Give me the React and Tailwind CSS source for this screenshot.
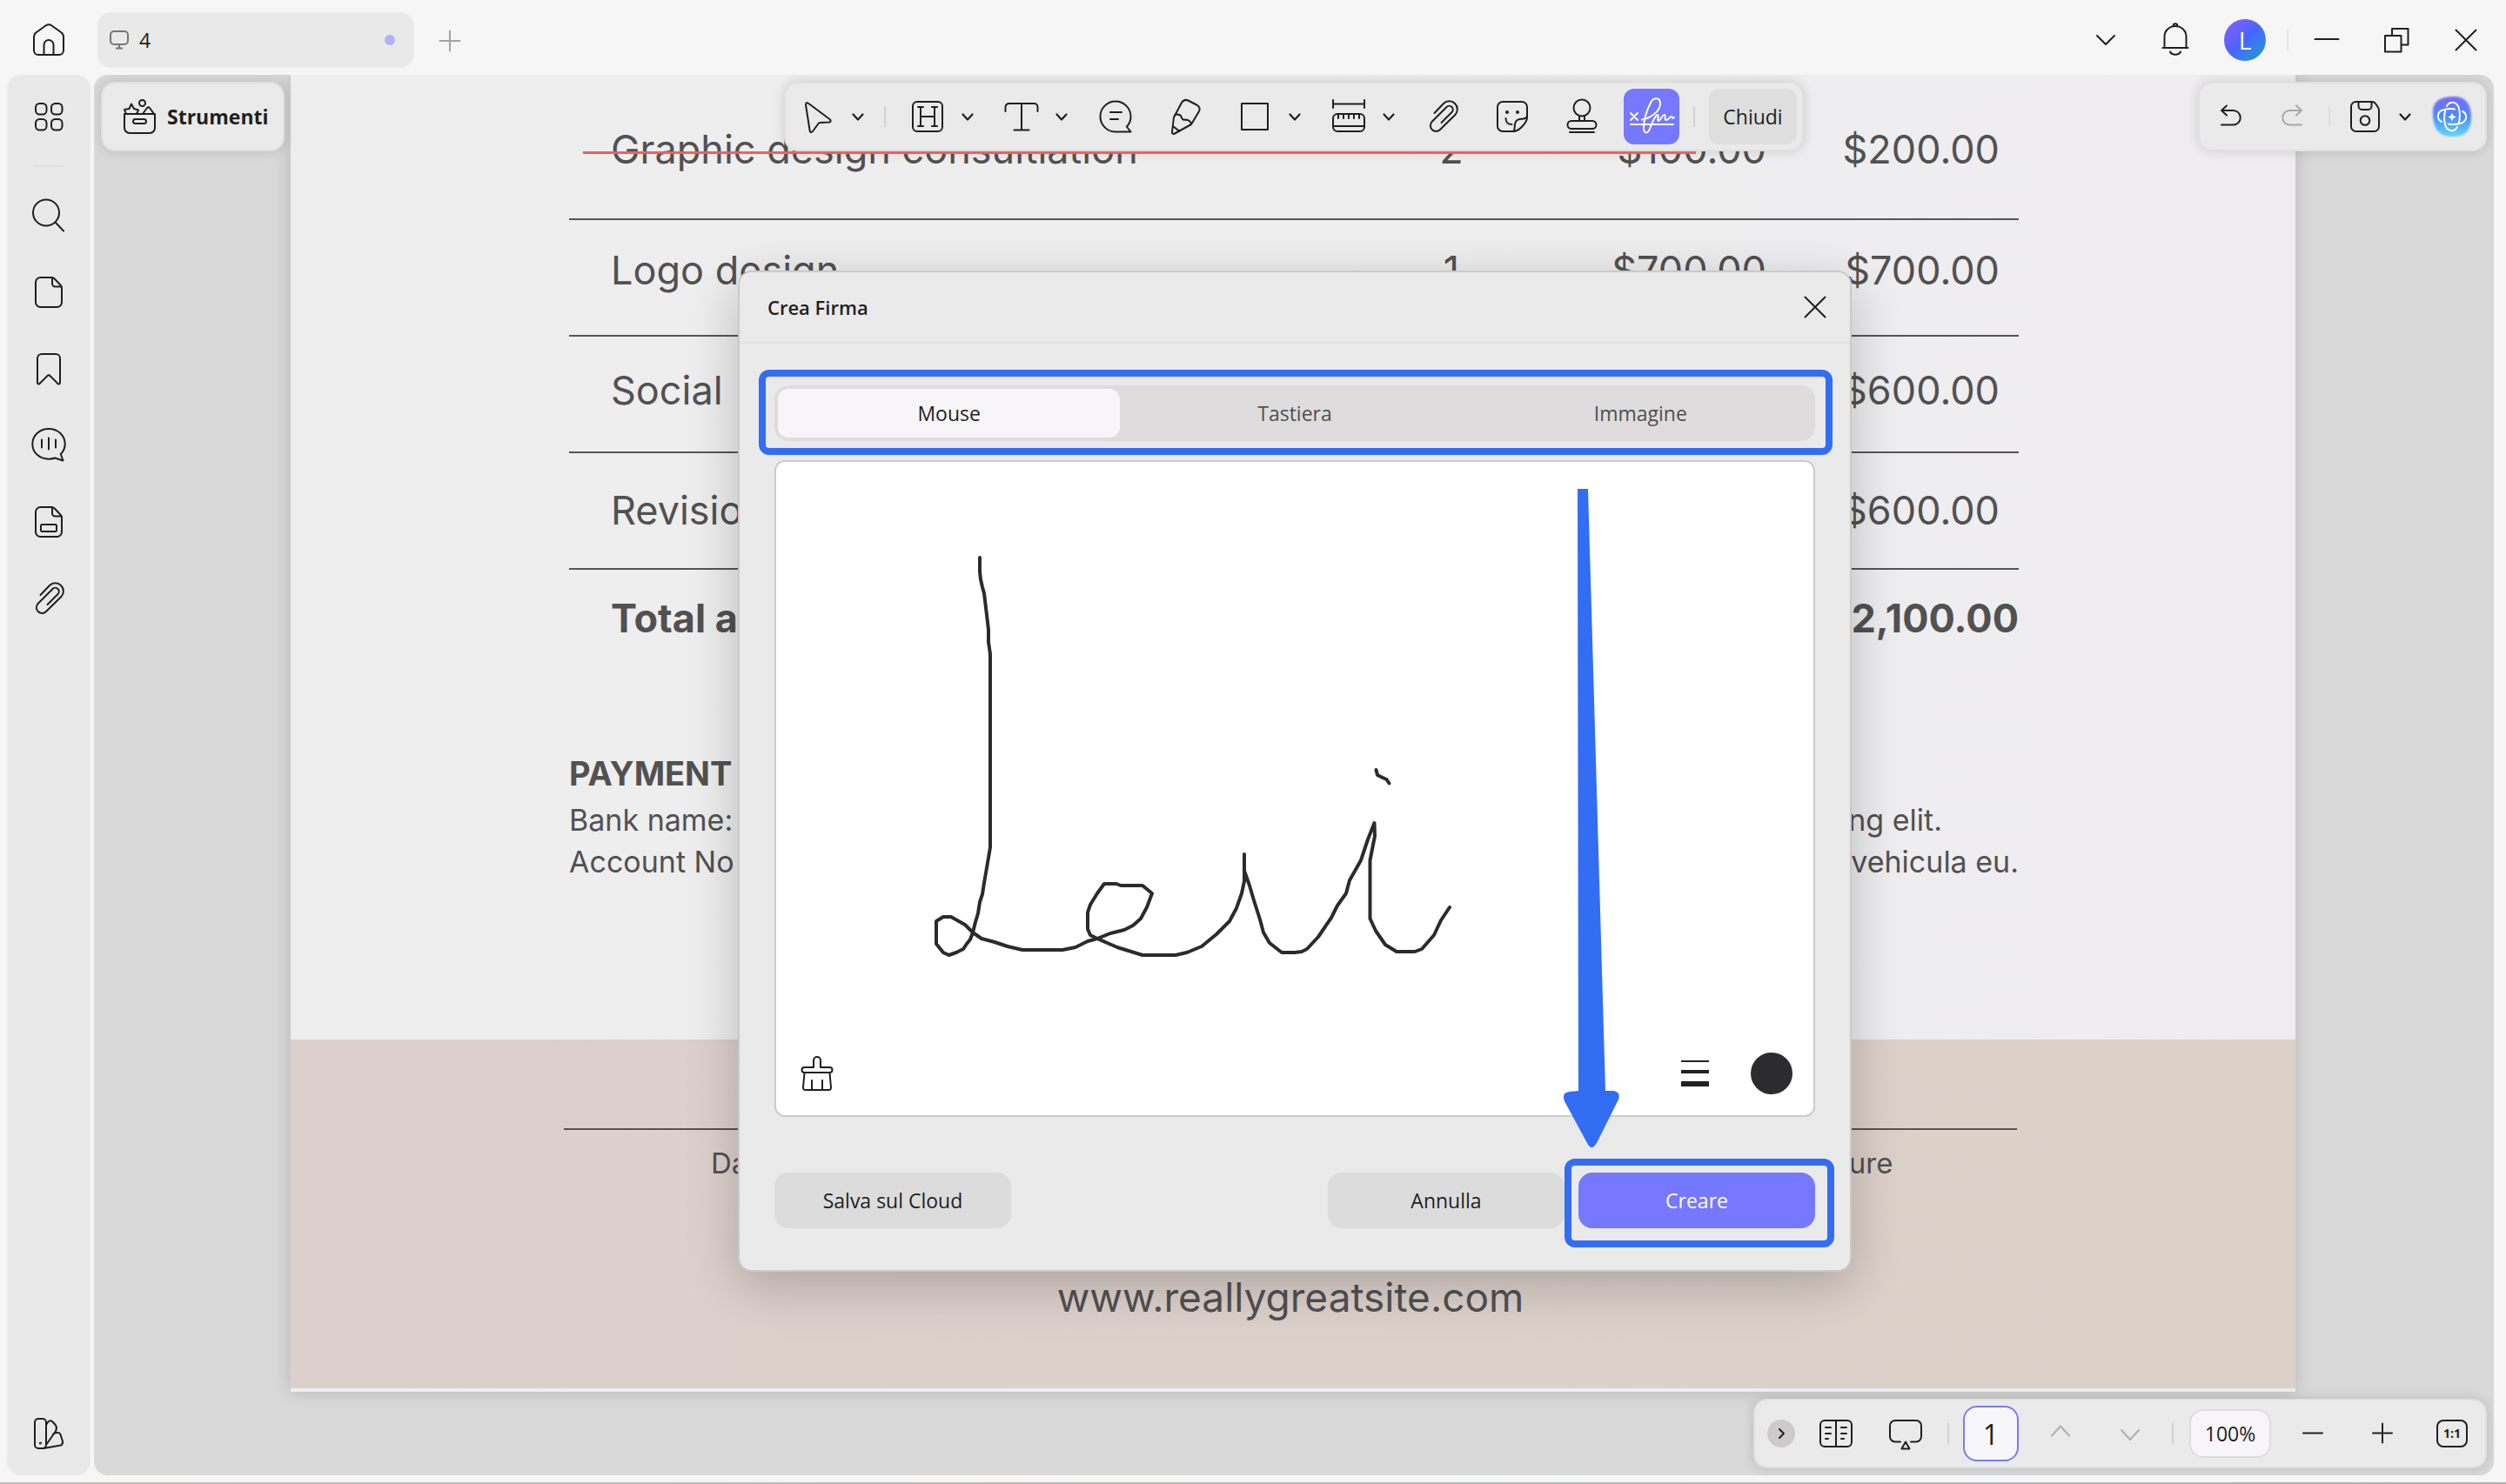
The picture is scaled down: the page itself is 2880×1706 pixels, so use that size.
import React, { useState } from 'react';

// Shared 40x40 line icon
const Icon = ({ children, className = 'size-10' }) => (
  <svg
    viewBox="0 0 40 40"
    className={`${className} shrink-0 overflow-visible`}
    fill="none"
    stroke="currentColor"
    strokeWidth="2"
    strokeLinecap="round"
    strokeLinejoin="round"
    aria-hidden="true"
  >
    {children}
  </svg>
);

const SmallChevron = () => (
  <svg viewBox="0 0 16 16" className="size-4 shrink-0" fill="none" stroke="currentColor" strokeWidth="2.2" strokeLinecap="round" strokeLinejoin="round" aria-hidden="true">
    <path d="M2.500 5.500l5.500 6 5.500-6" />
  </svg>
);

const clipPath = 'M10.5 16 21 5a9.3 9.3 0 0 1 13.3 13L17 35a6.5 6.5 0 0 1-9.2-9.2L24.5 9a4.2 4.2 0 0 1 6 6L18.5 27';
const pagePath = 'M10.5 3H23a6 6 0 0 1 4 1.8l6.5 7A5 5 0 0 1 35 15v16.5a5.5 5.5 0 0 1-5.5 5.5h-19A5.5 5.5 0 0 1 5 31.5v-23A5.5 5.5 0 0 1 10.5 3ZM24 3v7a3.5 3.5 0 0 0 3.5 3.5H35';

const icons = {
  home: <path d="M3 16.5c0-2.5 1-4 3-5.5l10.5-7.5q3.500-2.500 7 0L34 11c2 1.500 3 3 3 5.500V32a5 5 0 0 1-5 5H8a5 5 0 0 1-5-5ZM14.500 37V25.500a5.500 5.500 0 0 1 11 0V37" />,
  grid: (
    <>
      <rect x="5" y="5" width="12.500" height="12.500" rx="4.500" />
      <rect x="23" y="5" width="12.500" height="12.500" rx="4.500" />
      <rect x="5" y="23" width="12.500" height="12.500" rx="4.500" />
      <rect x="23" y="23" width="12.500" height="12.500" rx="4.500" />
    </>
  ),
  search: (
    <>
      <circle cx="17" cy="16.500" r="15" />
      <path d="M28 28l9 9.500" />
    </>
  ),
  page: <path d={pagePath} />,
  bookmark: <path d="M12 3h16a5 5 0 0 1 5 5v28c0 1.500-1.500 2-2.500 1l-9-9a2 2 0 0 0-3 0l-9 9c-1 1-2.500.5-2.500-1V8a5 5 0 0 1 5-5Z" />,
  voice: <path d="M27 34.500c-2 .8-4.500 1.200-7 1.200C9.500 35.700 1.300 28.500 1.300 18.500S9.500 1 20 1s18.700 7.300 18.700 17.500c0 4.300-1.700 8.300-4.900 11.500l2.700 7.500ZM12 13.500v9M20 11.500v13M28 13.500v9" />,
  form: (
    <>
      <path d={pagePath} />
      <rect x="11" y="23" width="18" height="8" rx="1.500" />
    </>
  ),
  clip: <path d={clipPath} />,
  swatch: (
    <>
      <rect x="4" y="3" width="13" height="34" rx="4" />
      <circle cx="10.500" cy="31" r="0.6" />
      <path d="M17 10l2-3c2-2.500 4-2 6 0l3 3.500c1.500 2 1.200 4 .2 6.500L17 33M25 20.500c3-1.500 7-2.500 8.500.5L36 29c.5 2.500 0 3.500-2 4.500L14 37" />
    </>
  ),
  toolbox: (
    <>
      <path d="M3 17h35v16a6 6 0 0 1-6 6H9a6 6 0 0 1-6-6ZM5 17l-2-5 5.500-1L11 5.500l3 5.500 5 1.500-2 4.500M24 17l5-7q1.500-1.500 3 0l5 7" />
      <rect x="13" y="23" width="15" height="5" rx="2.500" />
      <circle cx="23.500" cy="4.500" r="3.500" />
    </>
  ),
  cursor: <path d="M6 6.500c0-2.500 1.500-3 3.300-1.500L33.500 23c1.800 1.500 1.500 3.200-.7 3.500L22.500 27c-1.200 0-1.800.5-2.300 1.500L14 37c-1.200 1.600-3 1.400-3.300-.5Z" />,
  highlight: (
    <>
      <rect x="3" y="3" width="34" height="34" rx="5" />
      <path d="M12 9v22M28 9v22M12 20h16M9 9h6M25 9h6M9 31h6M25 31h6" />
    </>
  ),
  text: <path d="M1.500 14V9a4 4 0 0 1 4-4h29a4 4 0 0 1 4 4v5M20 5v30M11.500 35.500h17" />,
  comment: <path d="M37.500 37.500H20A17.500 17.500 0 1 1 37.500 20c0 4.500-1.600 8.500-4.700 11.500ZM14 15h13M14 23h9" />,
  pencil: <path d="M5 37.500 7 21l9-17q3-4.500 7.500-2.500L34 7q4 2.800 2 7L27 29 8 39.500Q5 41 5 37.500ZM8 18q6-1.500 7.500 2 1 4.500 4.500 3.500 6.500.500 7 5.500M6 31l7.500 6" />,
  square: <rect x="5" y="5" width="30" height="30" />,
  ruler: (
    <>
      <path d="M2 1v9M38 1v9M2 5.500h36M2 31h36M8 17v5M14 17v5M20 17v5M26 17v5M32 17v5" />
      <rect x="2" y="17" width="36" height="20" rx="5" />
    </>
  ),
  sticker: (
    <>
      <path d="M21.500 37H9a6 6 0 0 1-6-6V9a6 6 0 0 1 6-6h22a6 6 0 0 1 6 6v12c0 6-9.500 16-15.500 16 1.500-2 1-5 1.500-8s2-5.500 5.500-6c4-.5 7 0 8.500-3M12.500 22c0 4.500 3 7 7 7" />
      <circle cx="14" cy="15" r="1" fill="currentColor" />
      <circle cx="26" cy="15" r="1" fill="currentColor" />
    </>
  ),
  stamp: (
    <>
      <circle cx="20" cy="10" r="9.500" />
      <path d="M17 20v5M23 20v5M6 38h28" />
      <rect x="3.500" y="25" width="33" height="9" rx="4.500" />
    </>
  ),
  undo: <path d="M15 7.500 9 13l6 5.500M9 13h13.500a8 8 0 0 1 0 16.500H9" />,
  redo: <path d="M25 7.500 31 13l-6 5.500M31 13H17.500a8 8 0 0 0 0 16.500H31" />,
  save: (
    <>
      <path d="M9.500 3H28c2 0 3 .5 4 2l3 4.500c.7 1 1 2 1 3.500v18.500a5.500 5.500 0 0 1-5.500 5.500h-21A5.500 5.500 0 0 1 4 31.500v-23A5.500 5.500 0 0 1 9.500 3ZM12.500 3v5a4 4 0 0 0 4 4h7a4 4 0 0 0 4-4V3" />
      <circle cx="20" cy="24.500" r="5.300" />
    </>
  ),
  bell: <path d="M7.500 29V16a12.500 12 0 0 1 25 0v13M5.500 29h29M17.700 4v-.5a2.300 2.300 0 0 1 4.600 0V4M14 33.500a6.300 4.500 0 0 0 12 0" />,
  chevron: <path d="M10 15l10 10 10-10" />,
  minimize: <path d="M6.500 19h27" />,
  restore: <path d="M7 15h18.500v18.500H7ZM15 15V7h18.500v18.500h-8" />,
  close: <path d="M8.500 8.500l23 23M31.500 8.500l-23 23" />,
  book: (
    <>
      <rect x="2" y="5" width="36" height="30" rx="5" />
      <path d="M20 5v30M8 13h6M8 20h6M8 26h3M26 13h6M26 20h6M26 26h3" />
    </>
  ),
  screen: <path d="M14 29.500H8a6 6 0 0 1-6-6V11a6 6 0 0 1 6-6h24a6 6 0 0 1 6 6v12.500a6 6 0 0 1-6 6h-6M20 29.500l4.500 8h-9Z" />,
  up: <path d="M10 22.500l10-11 10 11" />,
  down: <path d="M10 16l10 11 10-11" />,
  minus: <path d="M9 19.500h22" />,
  plus: <path d="M9 19.500h22M20 8.500v22" />,
  brush: <path d="M16 13V5a4 4 0 0 1 8 0v8h10.500a3 3 0 0 1 0 6h-29a3 3 0 0 1 0-6ZM5.500 19.500 4 36a2.500 2.500 0 0 0 2.500 3h27a2.500 2.500 0 0 0 2.500-3l-1.500-16.500M14 28v11M26 28v11" />,
};

const IconButton = ({ name, label, className = '' }) => (
  <button type="button" aria-label={label} className={className}>
    <Icon>{icons[name]}</Icon>
  </button>
);

// Tool with a dropdown arrow beside it
const MenuTool = ({ name, label, className = 'mr-[34px]' }) => (
  <button type="button" aria-label={label} className={`flex items-center gap-[18px] ${className}`}>
    <Icon>{icons[name]}</Icon>
    <SmallChevron />
  </button>
);

const Divider = ({ className = '' }) => <div className={`h-6 w-0.5 shrink-0 bg-[#d2d2d2] ${className}`}></div>;

const panel = 'flex h-20 items-center rounded-2xl border-2 border-[#e0e0e0] bg-[#eaeaea] shadow-[0_0_14px_rgba(0,0,0,0.14)]';

const TopBar = () => (
  <header className="flex h-[86px] shrink-0 items-center pt-1.5 pr-[26px]">
    <div className="flex w-28 justify-center">
      <IconButton name="home" label="Home" />
    </div>
    <div className="flex h-16 w-[364px] items-center rounded-2xl bg-[#e9e9e9] pr-[22px] pl-3.5">
      <svg viewBox="0 0 22 22" className="size-[22px] text-[#777]" fill="none" stroke="currentColor" strokeWidth="2" aria-hidden="true">
        <rect x="1" y="1" width="20" height="15" rx="4" />
        <path d="M11 16v4M7 20.500h8" />
      </svg>
      <span className="ml-3 flex-1">4</span>
      <span className="size-3 rounded-full bg-[#b4b0f2]"></span>
    </div>
    <button type="button" aria-label="Nuova scheda" className="ml-[21px] text-[#a3a3a3]">
      <Icon>
        <path d="M8.500 21h23M20 9.500v23" />
      </Icon>
    </button>
    <div className="flex flex-1 items-center justify-end">
      <IconButton name="chevron" label="Altro" className="mr-10" />
      <IconButton name="bell" label="Notifiche" className="mr-9" />
      <button type="button" className="mr-6 size-12 rounded-full bg-linear-to-br from-[#8a5cff] via-[#4864ff] to-[#00a0c8] text-[28px] leading-none text-white">
        L
      </button>
      <div className="mr-6 h-6 w-0.5 bg-[#e6e6e8]"></div>
      <IconButton name="minimize" label="Riduci" className="mr-10" />
      <IconButton name="restore" label="Ripristina" className="mr-10" />
      <IconButton name="close" label="Chiudi finestra" />
    </div>
  </header>
);

const sideItems = [
  ['search', 'Cerca'],
  ['page', 'Pagine'],
  ['bookmark', 'Segnalibri'],
  ['voice', 'Commenti'],
  ['form', 'Campi'],
  ['clip', 'Allegati'],
];

const Sidebar = () => (
  <nav className="mr-1 ml-2 flex w-24 shrink-0 flex-col items-center rounded-2xl bg-[#e9e9e9] pt-1">
    <IconButton name="grid" label="Miniature" className="flex h-[88px] items-center" />
    <div className="my-3 h-0.5 w-9 bg-[#e0e0e0]"></div>
    {sideItems.map(([name, label]) => (
      <IconButton key={name} name={name} label={label} className="flex h-[88px] items-center" />
    ))}
    <IconButton name="swatch" label="Temi" className="mt-auto mb-7" />
  </nav>
);

const AiLogo = () => (
  <svg viewBox="0 0 48 48" className="size-12" fill="none" aria-hidden="true">
    <defs>
      <linearGradient id="ai" x1="0" y1="0" x2="0" y2="1">
        <stop offset="0" stopColor="#7a68fb" />
        <stop offset="0.5" stopColor="#4a8cff" />
        <stop offset="1" stopColor="#5fd8f2" />
      </linearGradient>
      <filter id="soft">
        <feGaussianBlur stdDeviation="1" />
      </filter>
    </defs>
    <path d="M24 1c15-1 22 8 22 23S40 47 25 47 3 40 2 22C1 7 9 2 24 1Z" fill="url(#ai)" filter="url(#soft)" />
    <g stroke="#fff" strokeWidth="2" strokeLinecap="round">
      <path d="M18 12c3-6 12-6 14 3 1.500 6 1 12-.5 17" />
      <path d="M36 18c6 3 6 12-3 14-6 1.500-9 1.500-13 .5" />
      <path d="M30 36c-3 6-12 6-14-3-1.500-6-1-12 .5-17" />
      <path d="M12 30c-6-3-6-12 3-14 6-1.500 8-1.500 12-.5" />
    </g>
    <path d="M24 19.500 25.500 23l3.500 1.500-3.500 1.500L24 29.500 22.500 26 19 24.500l3.500-1.500Z" fill="#fff" />
  </svg>
);

const Toolbars = () => (
  <div className="absolute inset-x-2 top-2 grid grid-cols-[1fr_auto_1fr]">
    <button type="button" className={`${panel} gap-3 justify-self-start pr-4 pl-[22px] font-bold`}>
      <Icon>{icons.toolbox}</Icon>
      Strumenti
    </button>

    <div className={`${panel} pr-1.5 pl-[17px]`}>
      <MenuTool name="cursor" label="Seleziona" className="mr-[22px]" />
      <Divider className="mr-7" />
      <MenuTool name="highlight" label="Evidenzia" />
      <MenuTool name="text" label="Testo" />
      <IconButton name="comment" label="Commento" className="mr-10" />
      <IconButton name="pencil" label="Matita" className="mr-10" />
      <MenuTool name="square" label="Forme" />
      <MenuTool name="ruler" label="Misura" />
      <IconButton name="clip" label="Allegato" className="mr-10" />
      <IconButton name="sticker" label="Adesivo" className="mr-10" />
      <IconButton name="stamp" label="Timbro" className="mr-7" />
      <button type="button" aria-label="Firma" className="mr-4 rounded-xl bg-[#7678ff] text-white">
        <svg viewBox="0 0 64 64" className="size-16" fill="none" stroke="currentColor" strokeWidth="2" strokeLinecap="round" aria-hidden="true">
          <path d="M8 28l8 8M16 28l-8 8M8 41h49" />
          <path d="M21 35.500C31 34 42 26 42 17c0-8-8-7-11-1-5 10-8 22-8 29s5 7 7 1c3-8 6-15 9-16 2 0-1 7 1 7s5-8 7-7-1 6 2 6 4-5 6-4-1 3 3 1" />
        </svg>
      </button>
      <Divider className="mr-4" />
      <button type="button" className="h-16 rounded-xl bg-[#dedede] px-4">Chiudi</button>
    </div>

    <div className={`${panel} justify-self-end pr-3.5 pl-4`}>
      <IconButton name="undo" label="Annulla modifica" className="mr-[30px]" />
      <IconButton name="redo" label="Ripeti modifica" className="mr-[22px] text-[#a8a8a8]" />
      <div className="mr-5 h-6 w-0.5 bg-[#dfdfe0]"></div>
      <MenuTool name="save" label="Salva" className="mr-[22px]" />
      <button type="button" aria-label="Assistente AI">
        <AiLogo />
      </button>
    </div>
  </div>
);

const items = [
  { name: 'Graphic design consultiation', qty: '2', price: '$100.00', total: '$200.00', pad: '*:pt-7' },
  { name: 'Logo design', qty: '1', price: '$700.00', total: '$700.00', pad: '*:pt-8' },
  { name: 'Social', total: '$600.00', pad: '*:pt-9' },
  { name: 'Revision', total: '$600.00', pad: '*:pt-10' },
];

const Invoice = () => (
  <article className="mr-[228px] mb-24 ml-[226px] flex flex-1 flex-col border-b-4 border-[#efedf0] bg-linear-to-r from-[#eeeeee] from-50% to-[#efedf0] font-[Inter,sans-serif] text-[#525152] shadow-[0_0_20px_rgba(0,0,0,0.16)]">
    <div className="flex-1 pr-[318px] pl-[320px] pt-[32px]">
      <table className="w-full table-fixed text-[45px] leading-[52px]">
        <tbody>
          {items.map((item) => (
            <tr key={item.name} className={`h-[134px] border-b-2 border-[#555] align-top ${item.pad}`}>
              <td className="w-[940px] pl-12">{item.name}</td>
              <td className="w-[148px] text-center">{item.qty}</td>
              <td className="pr-[22px] text-right">{item.price}</td>
              <td className="w-[268px] pr-[22px] text-right">{item.total}</td>
            </tr>
          ))}
          <tr className="font-bold *:pt-[30px]">
            <td className="pl-12">Total amount</td>
            <td colSpan="3" className="text-right">$2,100.00</td>
          </tr>
        </tbody>
      </table>
      <div className="mt-[128px] flex items-end justify-between text-[34px] leading-[48px]">
        <div>
          <h2 className="mb-1.5 text-[38px] font-bold">PAYMENT</h2>
          <p>Bank name:</p>
          <p>Account No</p>
        </div>
        <div className="text-right">
          <p className="pr-[88px]">adipiscing elit.</p>
          <p>sed vehicula eu.</p>
        </div>
      </div>
    </div>
    <footer className="bg-linear-to-r from-[#ddd0cc] to-[#dcd1c9] pt-[102px] pr-[320px] pb-[77px] pl-[314px] text-center">
      <div className="flex justify-between text-[33px] leading-[48px]">
        <p className="w-[410px] border-t-2 border-[#5b524b] pt-3.5">Date</p>
        <p className="w-[434px] border-t-2 border-[#5b524b] pt-3.5">Signature</p>
      </div>
      <p className="mt-[102px] text-[46px] leading-[56px]">www.reallygreatsite.com</p>
    </footer>
  </article>
);

// Handwritten "Levi" drawn with the mouse
const Signature = () => (
  <svg viewBox="0 0 660 540" className="h-[540px] w-[660px]" fill="none" stroke="#2b2b2c" strokeWidth="4" strokeLinecap="round" strokeLinejoin="round" role="img" aria-label="Firma">
    <path d="M86 41V57L87 66 89 75 91 82 94 107 96 124V138L98 152V374L96 386 91 415 89 428 86 437 84 450 81 460 78 472 75 480 71 485 67 491 59 495 50.500 498 44 495 36 485V459L44 454 53 454 60 458 69 463 78 472 88 479 103 483 118 488 135 492H181L196 489 210 482 221 479 236 473 252 469 262 464 271 456 278 443 284 427 273 418H248L243 416H229L221 427 213 440 210 449V468L213 475 221 479 244 489 273 498H311L324 495 341 488 358 474 373 459 381 444 387 427 390 413V382 401L396 418 401 435 408 457 412 472 419 484 433 495H448L456 494 462 491 475 477 490 455 497 441 507 427 511 412 524 389 532 365 539.500 346 540 361 534.500 389V456L541 470 552 486 565 494H586L594 491 608 475 616 458 626 443" />
    <path d="M541.500 285 543 291 549 294 553.500 296 556.500 300.500" />
  </svg>
);

const modes = ['Mouse', 'Tastiera', 'Immagine'];

const SignatureDialog = () => {
  const [mode, setMode] = useState('Mouse');

  return (
    <section role="dialog" aria-labelledby="dialog-title" className="relative w-full max-w-7xl rounded-2xl border-2 border-[#cacaca] bg-[#eaeaeb] shadow-[0_16px_60px_rgba(0,0,0,0.22)]">
      <div className="flex h-[82px] items-center justify-between border-b-2 border-[#e2e2e2] pr-5 pl-8">
        <h1 id="dialog-title" className="text-[22px] font-semibold">Crea Firma</h1>
        <IconButton name="close" label="Chiudi" />
      </div>

      <div className="px-10 pt-12 pb-12">
        <div className="relative mb-[22px]">
          <div role="tablist" className="grid h-16 grid-cols-3 gap-1 rounded-2xl bg-[#dedcdd] p-1">
            {modes.map((m) => (
              <button
                key={m}
                type="button"
                role="tab"
                aria-selected={m === mode}
                onClick={() => setMode(m)}
                className={m === mode ? 'rounded-xl bg-[#f7f5f7]' : 'rounded-xl text-[#505050]'}
              >
                {m}
              </button>
            ))}
          </div>
          <div className="pointer-events-none absolute -top-[18px] -right-5 -bottom-4 -left-[18px] rounded-xl border-8 border-[#336df4]"></div>
        </div>

        <div className="flex flex-col rounded-xl border-2 border-[#cccccd] bg-white pt-[69px] pr-6 pb-6 pl-[27px]">
          <div className="pl-[121px]">
            <Signature />
          </div>
          <div className="mt-[70px] flex items-center">
            <IconButton name="brush" label="Cancella" />
            <button type="button" aria-label="Spessore" className="mr-12 ml-auto flex w-8 flex-col gap-[9px]">
              <span className="h-0.5 w-full bg-[#222]"></span>
              <span className="h-1 w-full bg-[#222]"></span>
              <span className="h-1.5 w-full bg-[#222]"></span>
            </button>
            <button type="button" aria-label="Colore" className="size-12 rounded-full bg-[#2c2b2d]"></button>
          </div>
        </div>

        <div className="mt-16 flex gap-4">
          <button type="button" className="mr-auto h-16 w-[272px] rounded-2xl bg-[#dcdcdd]">Salva sul Cloud</button>
          <button type="button" className="h-16 w-[272px] rounded-2xl bg-[#dcdcdd]">Annulla</button>
          <div className="relative">
            <button type="button" className="h-16 w-[272px] rounded-2xl bg-[#7678ff] text-white">Creare</button>
            <div className="pointer-events-none absolute -top-4 -right-[22px] -bottom-[22px] -left-4 rounded-xl border-8 border-[#336df4]"></div>
            <svg viewBox="0 0 66 758" className="pointer-events-none absolute -top-[786px] -left-[18px] h-[758px] w-[66px]" fill="#336df4" aria-hidden="true">
              <path d="M17 0h12l20 692h9q9 1 6 10L39 752q-6 10-11 0L2 704q-4-10 6-11l10-1Z" />
            </svg>
          </div>
        </div>
      </div>
    </section>
  );
};

const ViewBar = () => (
  <div className={`${panel} absolute right-2 bottom-2 pr-5 pl-3.5`}>
    <button type="button" aria-label="Comprimi" className="mr-[27px] rounded-full bg-[#cccacb]">
      <svg viewBox="0 0 32 32" className="size-8" fill="none" stroke="currentColor" strokeWidth="2" strokeLinecap="round" strokeLinejoin="round" aria-hidden="true">
        <path d="M14 11l5 5-5 5" />
      </svg>
    </button>
    <IconButton name="book" label="Layout pagina" className="mr-10" />
    <IconButton name="screen" label="Presentazione" className="mr-7" />
    <Divider className="mr-4" />
    <input aria-label="Pagina" defaultValue="1" className="mr-7 size-16 rounded-2xl border-2 border-[#7b7cee] bg-[#f7f6f8] text-center text-[32px]" />
    <IconButton name="up" label="Pagina precedente" className="mr-10 text-[#b0aeb0]" />
    <IconButton name="down" label="Pagina successiva" className="mr-7 text-[#b0aeb0]" />
    <Divider className="mr-[18px]" />
    <input aria-label="Zoom" defaultValue="100%" className="mr-7 h-14 w-[94px] rounded-2xl border-2 border-[#dfdddf] bg-[#f7f5f7] text-center" />
    <IconButton name="minus" label="Riduci zoom" className="mr-10" />
    <IconButton name="plus" label="Aumenta zoom" className="mr-[42px]" />
    <button type="button" className="h-8 w-9 rounded-lg border-2 border-[#1f1f1f] text-sm leading-none font-bold">1:1</button>
  </div>
);

const App = () => (
  <div className="flex h-screen flex-col bg-[#f6f6f6] font-['Open_Sans','Noto_Sans',sans-serif] text-[23px] text-[#1f1f1f]">
    <TopBar />
    <div className="flex min-h-0 flex-1 pr-3.5 pb-2">
      <Sidebar />
      <main className="relative flex min-w-0 flex-1 overflow-hidden rounded-2xl bg-[#d9d9d9]">
        <Invoice />
        <Toolbars />
        {/* red guide under the toolbar */}
        <div className="absolute top-[88px] left-[562px] h-[3px] w-[1279px] bg-[#ee6060]"></div>
        <ViewBar />
        <div className="absolute inset-x-0 top-[225px] flex justify-center pl-0.5">
          <SignatureDialog />
        </div>
      </main>
    </div>
    <div className="h-0.5 shrink-0 bg-linear-to-r from-[#c5bcb8] to-[#aab4b5]"></div>
  </div>
);

export default App;
